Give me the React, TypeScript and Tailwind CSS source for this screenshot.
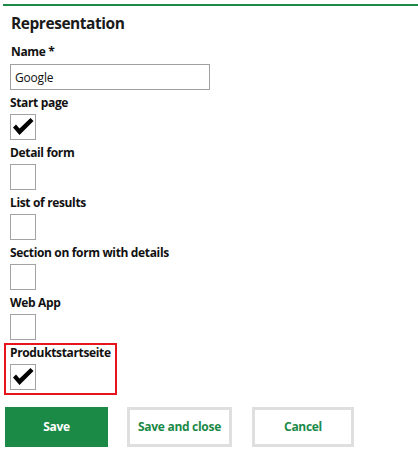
import React from "react";

const fields = [
	{ label: "Start page", checked: true },
	{ label: "Detail form", checked: false },
	{ label: "List of results", checked: false },
	{ label: "Section on form with details", checked: false },
	{ label: "Web App", checked: false },
];

function Checkbox({ checked }: { checked: boolean }) {
	return (
		<div className="w-[26px] h-[26px] border border-[#a3a3a3] bg-white relative">
			{checked && (
				<svg width="26" height="26" viewBox="0 0 26 26" className="absolute -left-px -top-px">
					<path d="M3 13.5 L6 10.5 L9.5 14.5 L20.5 4 L23.5 7 L9.5 21 Z" fill="#000" />
				</svg>
			)}
		</div>
	);
}

function Field({ label, checked }: { label: string; checked: boolean }) {
	return (
		<div>
			<div className="text-[12px] leading-[16px] font-bold tracking-[-0.35px] text-[#111] whitespace-nowrap">{label}</div>
			<div className="mt-[3px]">
				<Checkbox checked={checked} />
			</div>
		</div>
	);
}

export default function App() {
	return (
		<div className="w-[418px] h-[463px] bg-white overflow-hidden" style={{ fontFamily: '"Open Sans", "Noto Sans", sans-serif' }}>
			<div className="ml-[3px] mt-[4px] h-[2px] bg-[#1b8a47]" />
			<div className="px-[10px]">
				<h1 className="mt-[7px] ml-px text-[15.5px] leading-[20px] font-bold tracking-[-0.45px] text-[#1a1a1a]">Representation</h1>
				<div className="mt-[11px] ml-px text-[12px] leading-[16px] font-bold tracking-[-0.35px] text-[#111]">Name *</div>
				<input
					readOnly
					value="Google"
					className="mt-[4px] block w-[200px] h-[26px] border border-[#a0a0a0] pl-[4px] text-[12px] tracking-[-0.2px] text-[#111] outline-none"
				/>
				<div className="flex flex-col gap-[5px] mt-[5px]">
					{fields.map((f) => (
						<Field key={f.label} label={f.label} checked={f.checked} />
					))}
				</div>
				<div className="mt-[3px] -ml-[6px] w-[113px] border-2 border-[#e8141b] pl-[4px] pb-[3px]">
					<Field label="Produktstartseite" checked />
				</div>
				<div className="mt-[12px] -ml-[5px] flex items-center">
					<button className="w-[103px] h-[40px] bg-[#1b8a47] text-white text-[12px] font-bold tracking-[-0.3px]">Save</button>
					<button className="ml-[19px] w-[105px] h-[40px] border-[3px] border-[#dfdfdf] bg-white text-[#1b8a47] text-[12px] font-bold tracking-[-0.3px]">
						Save and close
					</button>
					<button className="ml-[20px] w-[102px] h-[40px] border-[3px] border-[#dfdfdf] bg-white text-[#1b8a47] text-[12px] font-bold tracking-[-0.3px]">
						Cancel
					</button>
				</div>
			</div>
		</div>
	);
}
